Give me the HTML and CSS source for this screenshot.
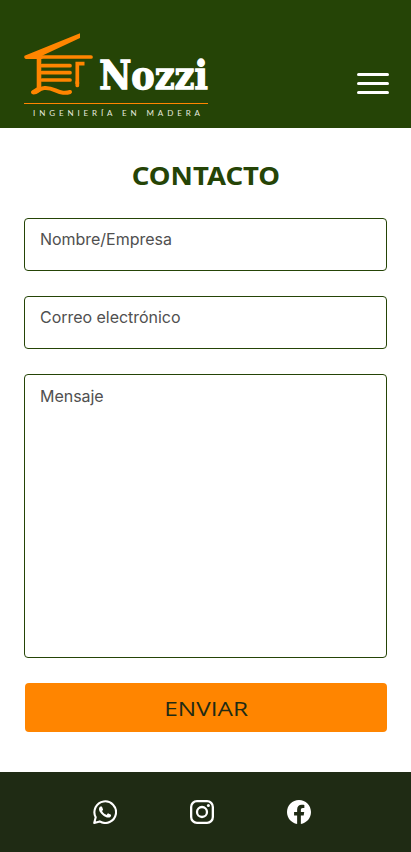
FILE: index.html
```html
<!DOCTYPE html>
<html lang="es">
<head>
<meta charset="utf-8">
<meta name="viewport" content="width=device-width, initial-scale=1">
<title>Nozzi - Contacto</title>
<link rel="stylesheet" href="styles.css">
</head>
<body>
<header class="header">
  <a class="brand" aria-label="Nozzi">
    <svg class="logo" width="186" height="86" viewBox="24 33 186 86">
      <g fill="none" stroke="#ff8500" stroke-width="3.7" stroke-linecap="round" stroke-linejoin="round">
        <path d="M42.5 57H91"/>
        <path d="M42 65.700H70M42 72.700H70M42 80H70"/>
        <path stroke-linecap="butt" stroke-linejoin="miter" d="M77.300 84V63.600H84.500"/>
        <path d="M77.300 82V85.500"/>
        <path stroke-width="4" d="M33.500 92.500C38 92.500 38 88.500 44 88C53 87 56 92.300 63 92.700Q67 93 70 92"/>
      </g>
      <path fill="#ff8500" d="M80 33.300V38L42.500 55.500V59H41.300V88L38 93L32 94Q30 92 32 90.500L36.700 87.500V59H26Q23.500 58 24.500 55.800Z"/>
      <path stroke="#ff8500" stroke-width="1" d="M24 103.500H208"/>
      <text class="logo-name" x="99.300" y="89" textLength="108.500" lengthAdjust="spacingAndGlyphs">Nozzi</text>
      <text class="logo-tag" x="33" y="116.200" textLength="167">INGENIERÍA EN MADERA</text>
    </svg>
  </a>
  <button class="menu" type="button" aria-label="Menú"><span></span><span></span><span></span></button>
</header>
<main class="contact">
  <h1 class="title"><span>CONTACTO</span></h1>
  <form class="form">
    <label class="field">Nombre/Empresa</label>
    <label class="field">Correo electrónico</label>
    <label class="field field-message">Mensaje</label>
    <button class="submit" type="button"><span>ENVIAR</span></button>
  </form>
</main>
<footer class="footer">
  <svg width="24" height="24" viewBox="0 0 24 24" fill="#fff"><path d="M17.472 14.382c-.297-.149-1.758-.867-2.030-.967-.273-.099-.471-.148-.670.150-.197.297-.767.966-.940 1.164-.173.199-.347.223-.644.075-.297-.150-1.255-.463-2.390-1.475-.883-.788-1.480-1.761-1.653-2.059-.173-.297-.018-.458.130-.606.134-.133.298-.347.446-.520.149-.174.198-.298.298-.497.099-.198.050-.371-.025-.520-.075-.149-.669-1.612-.916-2.207-.242-.579-.487-.500-.669-.510l-.570-.010c-.198 0-.520.074-.792.372-.272.297-1.040 1.016-1.040 2.479 0 1.462 1.065 2.875 1.213 3.074.149.198 2.096 3.200 5.077 4.487.709.306 1.262.489 1.694.625.712.227 1.360.195 1.871.118.571-.085 1.758-.719 2.006-1.413.248-.694.248-1.289.173-1.413-.074-.124-.272-.198-.570-.347"/><path fill="none" stroke="#fff" stroke-width="2.100" stroke-linejoin="round" d="M1.200 22.900L2.700 17.200A10.800 10.800 0 1 1 6.700 21.400Z"/></svg>
  <svg width="24" height="24" viewBox="0 0 24 24" fill="none" stroke="#fff" stroke-width="2.300"><rect x="1.150" y="1.150" width="21.700" height="21.700" rx="5.800"/><circle cx="12" cy="12" r="5"/><circle cx="18.400" cy="5.600" r="1.500" fill="#fff" stroke="none"/></svg>
  <svg width="24" height="24" viewBox="0 0 24 24" fill="#fff"><path d="M24 12.070C24 5.400 18.630 0 12 0S0 5.400 0 12.070C0 18.100 4.390 23.090 10.130 24v-8.440H7.080v-3.490h3.050V9.410c0-3.020 1.790-4.690 4.530-4.690 1.310 0 2.690.240 2.690.240v2.970h-1.520c-1.490 0-1.960.930-1.960 1.890v2.250h3.330l-.530 3.490h-2.800V24C19.610 23.090 24 18.100 24 12.070z"/></svg>
</footer>
</body>
</html>
```

FILE: styles.css
```css
* { box-sizing: border-box; }

body {
  margin: 0;
  min-height: 852px;
  display: flex;
  flex-direction: column;
  background: #fff;
  font-family: Inter, sans-serif;
}

.header {
  height: 128px;
  padding: 33px 22px 0 24px;
  display: flex;
  justify-content: space-between;
  align-items: flex-start;
  background: #254406;
}

.logo {
  display: block;
  overflow: visible;
}

.logo-name {
  font: bold 40px "DejaVu Serif Condensed", "DejaVu Serif", serif;
  fill: #fff;
  stroke: #fff;
  stroke-width: 1.3px;
}

.logo-tag {
  font: 8px Lato, sans-serif;
  fill: #e6eadf;
}

.menu {
  width: 32px;
  margin-top: 40px;
  padding: 0;
  border: 0;
  background: none;
  display: flex;
  flex-direction: column;
  gap: 6px;
}

.menu span {
  height: 3px;
  border-radius: 1.5px;
  background: #fff;
}

.contact {
  flex: 1;
  padding: 29px 24px 0;
}

.title {
  margin: 0 0 25px;
  height: 36px;
  font: bold 25px/36px "Noto Sans", sans-serif;
  color: #254406;
  text-align: center;
}

.title span {
  display: inline-block;
  transform: translateX(0.5px) scaleX(1.1);
}

.form {
  display: flex;
  flex-direction: column;
  gap: 25px;
}

.field {
  height: 53px;
  padding: 10px 15px;
  border: 1px solid #254406;
  border-radius: 4px;
  font-size: 16px;
  line-height: 20px;
  letter-spacing: -0.03px;
  color: #505050;
}

.field-message {
  height: 284px;
  padding-top: 11px;
}

.submit {
  height: 49px;
  margin-left: 1px;
  padding: 2px 0 0;
  border: 0;
  border-radius: 4px;
  background: #ff8500;
  color: #1f2b14;
  font: 20.5px/47px "Open Sans", sans-serif;
}

.submit span {
  display: inline-block;
  transform: scaleX(1.19);
}

.footer {
  height: 80px;
  padding: 0 100px 0 93px;
  display: flex;
  justify-content: space-between;
  align-items: center;
  background: #1f2b14;
}
```
